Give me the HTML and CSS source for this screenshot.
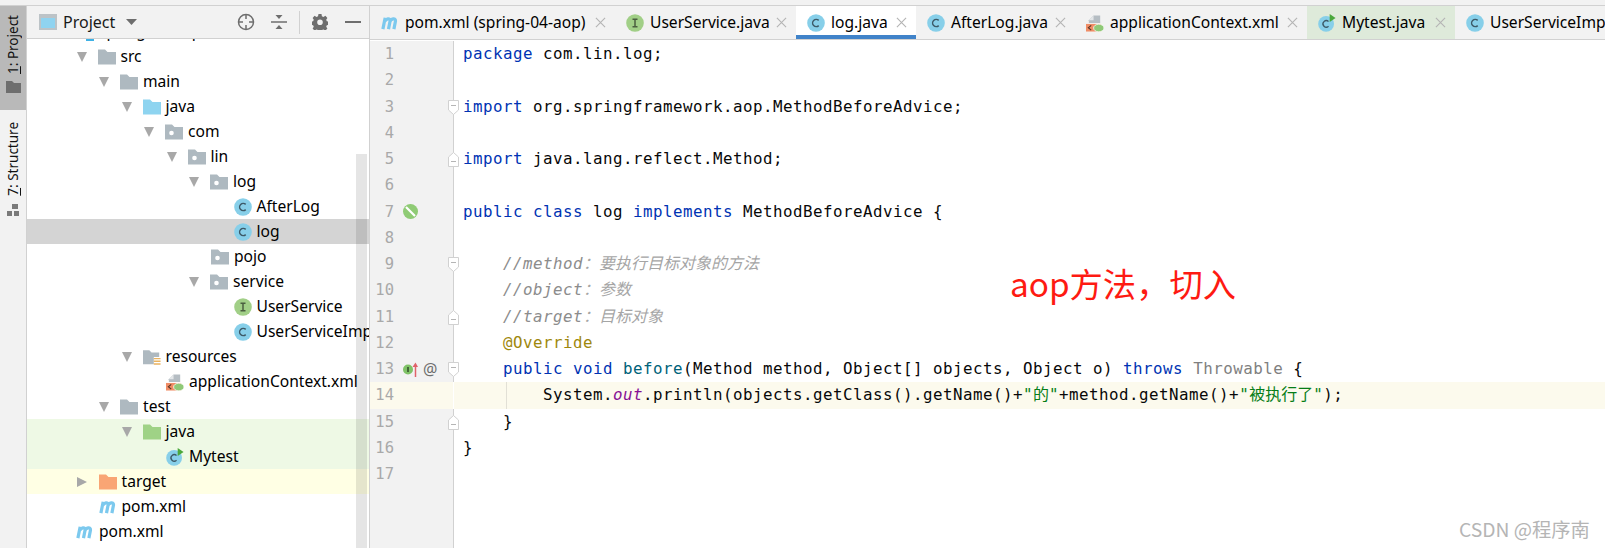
FILE: index.html
```html
<!DOCTYPE html>
<html lang="en">
<head>
<meta charset="utf-8">
<title>log.java</title>
<link rel="stylesheet" href="styles.css">
</head>
<body>
<svg class="defs" xmlns="http://www.w3.org/2000/svg">
  <symbol id="folder" viewBox="0 0 18 18"><path d="M0 1.500h7l2.500 2.500h8.500v12.500h-18z" fill="#aeb9c0"/></symbol>
  <symbol id="pkg" viewBox="0 0 18 18"><path d="M0 1.500h7l2.500 2.500h8.500v12.500h-18z" fill="#aeb9c0"/><circle cx="6.500" cy="10" r="2.300" fill="#fff"/></symbol>
  <symbol id="src" viewBox="0 0 18 18"><path d="M0 1.500h7l2.500 2.500h8.500v12.500h-18z" fill="#8ed4f0"/></symbol>
  <symbol id="test" viewBox="0 0 18 18"><path d="M0 1.500h7l2.500 2.500h8.500v12.500h-18z" fill="#9fd286"/></symbol>
  <symbol id="target" viewBox="0 0 18 18"><path d="M0 1.500h7l2.500 2.500h8.500v12.500h-18z" fill="#f9a574"/></symbol>
  <symbol id="res" viewBox="0 0 20 18"><path d="M0 1.500h7l2.500 2.500h8.500v5h-6v8h-12z" fill="#aeb9c0"/><path d="M12 10h7.500v1.600h-7.500zM12 13h7.500v1.600h-7.500zM12 16h7.500v1.600h-7.500z" fill="#eab35f"/></symbol>
  <symbol id="cls" viewBox="0 0 18 18"><circle cx="9" cy="9" r="8.800" fill="#87cfe9"/><path d="M11.700 6.400a3.600 3.600 0 1 0 0 5.200" fill="none" stroke="#3d5a68" stroke-width="1.500"/></symbol>
  <symbol id="iface" viewBox="0 0 18 18"><circle cx="9" cy="9" r="8.800" fill="#a1cf87"/><path d="M6.500 5.200h5M6.500 12.800h5M9 5.200v7.600" fill="none" stroke="#4b5f40" stroke-width="1.500"/></symbol>
  <symbol id="run" viewBox="0 0 20 20"><circle cx="9" cy="11" r="8.800" fill="#87cfe9"/><path d="M11.700 8.400a3.600 3.600 0 1 0 0 5.200" fill="none" stroke="#3d5a68" stroke-width="1.500"/><path d="M13 0l6.500 4.500-6.500 4.500z" fill="#4aa83c"/></symbol>
  <symbol id="spring" viewBox="0 0 19 19"><path d="M3 6.500l5-5h7v8h-12z" fill="#b5bdc3"/><path d="M8 1.500v5h-5z" fill="#e4e7e9"/><path d="M0 10.500h16v8h-16z" fill="#f08d66"/><path d="M5.500 12l-3 2.500 3 2.500" fill="none" stroke="#5a3526" stroke-width="1.200"/><ellipse cx="13.500" cy="14.800" rx="5.500" ry="4" fill="#8fc977" stroke="#fff" stroke-width=".8"/></symbol>
  <symbol id="maven" viewBox="0 0 19 15"><path d="M2 14l2.400-12M4 6c1-3 6-4.500 5.600-.5l-1.700 8.500M9.500 6c1-3 6.200-4.500 5.800-.5l-1.700 8.500" fill="none" stroke="#7cc9ee" stroke-width="3.400"/></symbol>
  <symbol id="fold-open" viewBox="0 0 11 15"><path d="M.5.500h10v9.500l-5 4.500-5-4.500z" fill="#fff" stroke="#d1d1d1"/><path d="M3 5.500h5" stroke="#b5b5b5"/></symbol>
  <symbol id="fold-shut" viewBox="0 0 11 15"><path d="M.5 14.500h10v-9.500l-5-4.500-5 4.500z" fill="#fff" stroke="#d1d1d1"/><path d="M3 9.500h5" stroke="#b5b5b5"/></symbol>
</svg>

<div class="strip"></div>
<div class="app">
  <nav class="rail">
    <div class="rail-tab active">
      <span class="rail-label"><u>1</u>: Project</span>
      <svg class="rail-icon" viewBox="0 0 15 12"><path d="M0 0h6l2 2h7v10h-15z" fill="#6e6e6e"/></svg>
    </div>
    <div class="rail-tab second">
      <span class="rail-label"><u>7</u>: Structure</span>
      <svg class="rail-icon" viewBox="0 0 13 12"><path d="M5 0h6v5h-6zM0 7h5v5h-5zM7 7h5v5h-5z" fill="#7a7a7a"/></svg>
    </div>
  </nav>

  <aside class="panel">
    <header class="panel-head">
      <svg class="view-icon" viewBox="0 0 18 16"><rect width="18" height="16" fill="#bcc3c7"/><rect x="2" y="4" width="14" height="10" fill="#8fd3f0"/></svg>
      <span class="panel-title">Project</span>
      <svg class="drop" viewBox="0 0 11 6"><path d="M0 0h11l-5.500 6z" fill="#6e6e6e"/></svg>
      <span class="head-space"></span>
      <svg class="tool t-target" viewBox="0 0 18 18"><circle cx="9" cy="9" r="7.500" fill="none" stroke="#6e6e6e" stroke-width="1.500"/><path d="M9 1v5M9 12v5M1 9h5M12 9h5" stroke="#6e6e6e" stroke-width="1.500"/></svg>
      <svg class="tool t-collapse" viewBox="0 0 18 18"><path d="M1 9h16" stroke="#6e6e6e" stroke-width="1.500"/><path d="M5.500 2h7l-3.500 4zM5.500 16h7l-3.500-4z" fill="#6e6e6e"/></svg>
      <span class="tool-sep"></span>
      <svg class="tool t-gear" viewBox="0 0 16 16"><path fill="#6e6e6e" fill-rule="evenodd" d="M6.500 0h3l.4 2.200 1.500.7 2-1.200 2 2.200-1.200 1.900.6 1.500 2.200.4v3l-2.200.5-.6 1.500 1.200 1.900-2 2-2-1.200-1.500.6-.4 2.200h-3l-.5-2.200-1.500-.6-1.900 1.200-2-2 1.200-1.900-.7-1.500-2.200-.5v-3l2.200-.4.700-1.500-1.200-1.900 2-2.200 1.900 1.200 1.500-.7zM8 5.400a2.800 2.800 0 1 0 0 5.600 2.800 2.800 0 0 0 0-5.600z"/></svg>
      <svg class="tool t-min" viewBox="0 0 16 2"><path d="M0 1h16" stroke="#6e6e6e" stroke-width="2"/></svg>
    </header>

    <div class="tree">
      <div class="row l0 partial"><span class="mod-dot"></span><span class="name">spring-04-aop</span></div>
      <div class="row l1"><i class="arrow"></i><svg class="ic"><use href="#folder"/></svg><span class="name">src</span></div>
      <div class="row l2"><i class="arrow"></i><svg class="ic"><use href="#folder"/></svg><span class="name">main</span></div>
      <div class="row l3"><i class="arrow"></i><svg class="ic"><use href="#src"/></svg><span class="name">java</span></div>
      <div class="row l4"><i class="arrow"></i><svg class="ic"><use href="#pkg"/></svg><span class="name">com</span></div>
      <div class="row l5"><i class="arrow"></i><svg class="ic"><use href="#pkg"/></svg><span class="name">lin</span></div>
      <div class="row l6"><i class="arrow"></i><svg class="ic"><use href="#pkg"/></svg><span class="name">log</span></div>
      <div class="row l7"><svg class="ic"><use href="#cls"/></svg><span class="name">AfterLog</span></div>
      <div class="row l7 selected"><svg class="ic"><use href="#cls"/></svg><span class="name">log</span></div>
      <div class="row l6"><svg class="ic"><use href="#pkg"/></svg><span class="name">pojo</span></div>
      <div class="row l6"><i class="arrow"></i><svg class="ic"><use href="#pkg"/></svg><span class="name">service</span></div>
      <div class="row l7"><svg class="ic"><use href="#iface"/></svg><span class="name">UserService</span></div>
      <div class="row l7"><svg class="ic"><use href="#cls"/></svg><span class="name">UserServiceImpl</span></div>
      <div class="row l3"><i class="arrow"></i><svg class="ic"><use href="#res"/></svg><span class="name">resources</span></div>
      <div class="row l4"><svg class="ic"><use href="#spring"/></svg><span class="name">applicationContext.xml</span></div>
      <div class="row l2"><i class="arrow"></i><svg class="ic"><use href="#folder"/></svg><span class="name">test</span></div>
      <div class="row l3 green"><i class="arrow"></i><svg class="ic"><use href="#test"/></svg><span class="name">java</span></div>
      <div class="row l4 green"><svg class="ic"><use href="#run"/></svg><span class="name">Mytest</span></div>
      <div class="row l1 yellow"><i class="arrow closed"></i><svg class="ic"><use href="#target"/></svg><span class="name">target</span></div>
      <div class="row l1"><svg class="ic"><use href="#maven"/></svg><span class="name">pom.xml</span></div>
      <div class="row l0"><svg class="ic"><use href="#maven"/></svg><span class="name">pom.xml</span></div>
    </div>
    <div class="scrollbar"></div>
  </aside>

  <main class="editor">
    <div class="tabs">
      <div class="tab t1"><svg class="ic"><use href="#maven"/></svg><span class="label">pom.xml (spring-04-aop)</span><svg class="x" viewBox="0 0 12 12"><path d="M1 1l10 10M11 1l-10 10"/></svg></div>
      <div class="tab t2"><svg class="ic"><use href="#iface"/></svg><span class="label">UserService.java</span><svg class="x" viewBox="0 0 12 12"><path d="M1 1l10 10M11 1l-10 10"/></svg></div>
      <div class="tab t3 current"><svg class="ic"><use href="#cls"/></svg><span class="label">log.java</span><svg class="x" viewBox="0 0 12 12"><path d="M1 1l10 10M11 1l-10 10"/></svg></div>
      <div class="tab t4"><svg class="ic"><use href="#cls"/></svg><span class="label">AfterLog.java</span><svg class="x" viewBox="0 0 12 12"><path d="M1 1l10 10M11 1l-10 10"/></svg></div>
      <div class="tab t5"><svg class="ic"><use href="#spring"/></svg><span class="label">applicationContext.xml</span><svg class="x" viewBox="0 0 12 12"><path d="M1 1l10 10M11 1l-10 10"/></svg></div>
      <div class="tab t6 testtab"><svg class="ic"><use href="#run"/></svg><span class="label">Mytest.java</span><svg class="x" viewBox="0 0 12 12"><path d="M1 1l10 10M11 1l-10 10"/></svg></div>
      <div class="tab t7"><svg class="ic"><use href="#cls"/></svg><span class="label">UserServiceImpl.java</span></div>
    </div>

    <div class="lines">
      <div class="line"><div class="gut"><span class="num">1</span></div><div class="code"><b class="kw">package</b> com.lin.log;</div></div>
      <div class="line"><div class="gut"><span class="num">2</span></div><div class="code"></div></div>
      <div class="line"><div class="gut"><span class="num">3</span><svg class="fold"><use href="#fold-open"/></svg></div><div class="code"><b class="kw">import</b> org.springframework.aop.MethodBeforeAdvice;</div></div>
      <div class="line"><div class="gut"><span class="num">4</span></div><div class="code"></div></div>
      <div class="line"><div class="gut"><span class="num">5</span><svg class="fold"><use href="#fold-shut"/></svg></div><div class="code"><b class="kw">import</b> java.lang.reflect.Method;</div></div>
      <div class="line"><div class="gut"><span class="num">6</span></div><div class="code"></div></div>
      <div class="line"><div class="gut"><span class="num">7</span><svg class="bean" viewBox="0 0 15 15"><circle cx="7.500" cy="7.500" r="7.500" fill="#8fcb75"/><path d="M3 3l9 9" stroke="#fff" stroke-width="2.200"/></svg></div><div class="code"><b class="kw">public class</b> log <b class="kw">implements</b> MethodBeforeAdvice {</div></div>
      <div class="line"><div class="gut"><span class="num">8</span></div><div class="code"></div></div>
      <div class="line"><div class="gut"><span class="num">9</span><svg class="fold"><use href="#fold-open"/></svg></div><div class="code">    <em class="cm">//method<span class="zh">：要执行目标对象的方法</span></em></div></div>
      <div class="line"><div class="gut"><span class="num">10</span></div><div class="code">    <em class="cm">//object<span class="zh">：参数</span></em></div></div>
      <div class="line"><div class="gut"><span class="num">11</span><svg class="fold"><use href="#fold-shut"/></svg></div><div class="code">    <em class="cm">//target<span class="zh">：目标对象</span></em></div></div>
      <div class="line"><div class="gut"><span class="num">12</span></div><div class="code">    <span class="ann">@Override</span></div></div>
      <div class="line"><div class="gut"><span class="num">13</span><svg class="impl" viewBox="0 0 15 15"><circle cx="5" cy="7.500" r="5" fill="#7fc267"/><path d="M5 5v5" stroke="#35502c" stroke-width="1.600"/><path d="M12.500 15V3" stroke="#e0626a" stroke-width="1.500"/><path d="M9.500 5l3-4.500 2.500 4.500z" fill="#e0626a"/></svg><span class="at">@</span><svg class="fold"><use href="#fold-open"/></svg></div><div class="code">    <b class="kw">public void</b> <span class="fn">before</span>(Method method, Object[] objects, Object o) <b class="kw">throws</b> <span class="dim">Throwable</span> {</div></div>
      <div class="line caret"><div class="gut"><span class="num">14</span><i class="guide-start"></i></div><div class="code"><span class="guide"></span>        System.<em class="field">out</em>.println(objects.getClass().getName()+<span class="str">"<span class="zh">的</span>"</span>+method.getName()+<span class="str">"<span class="zh">被执行了</span>"</span>);</div></div>
      <div class="line"><div class="gut"><span class="num">15</span><svg class="fold"><use href="#fold-shut"/></svg></div><div class="code">    }</div></div>
      <div class="line"><div class="gut"><span class="num">16</span></div><div class="code">}</div></div>
      <div class="line"><div class="gut"><span class="num">17</span></div><div class="code"></div></div>
      <div class="line rest"><div class="gut"></div><div class="code"></div></div>
    </div>

    <div class="note">aop方法，切入</div>
    <div class="mark">CSDN @程序南</div>
  </main>
</div>
</body>
</html>
```

FILE: styles.css
```css
* { box-sizing: border-box; }
html, body { margin: 0; padding: 0; height: 100%; overflow: hidden; background: #fff; }
body { display: flex; flex-direction: column; width: 1605px; height: 548px; font-family: "Noto Sans", "Noto Sans CJK SC", sans-serif; color: #000; }
.defs { display: none; }

.strip { flex: 0 0 6px; background: #f2f2f2; border-bottom: 1px solid #d1d1d1; }
.app { flex: 1; display: flex; min-height: 0; }

/* left rail */
.rail { flex: 0 0 27px; background: #f2f2f2; border-right: 1px solid #d1d1d1; display: flex; flex-direction: column; }
.rail-tab { display: flex; flex-direction: column; align-items: center; }
.rail-tab.active { height: 104px; padding-top: 9px; background: #b9b9b9; }
.rail-tab.second { padding-top: 12px; }
.rail-label { writing-mode: vertical-rl; transform: rotate(180deg); font-size: 13.500px; line-height: 16px; color: #111; white-space: nowrap; }
.rail-icon { width: 15px; height: 12px; margin-top: 7px; }
.rail-tab.second .rail-icon { width: 13px; margin-top: 8px; }

/* project panel */
.panel { flex: 0 0 343px; position: relative; display: flex; flex-direction: column; overflow: hidden; border-right: 1px solid #d1d1d1; }
.panel-head { flex: 0 0 33px; display: flex; align-items: center; background: #f2f2f2; border-bottom: 1px solid #d1d1d1; padding-left: 12px; position: relative; z-index: 1; }
.view-icon { width: 18px; height: 16px; margin-right: 6px; }
.panel-title { font-size: 16px; color: #1a1a1a; }
.drop { width: 11px; height: 6px; margin-left: 11px; }
.head-space { flex: 1; }
.tool { flex: none; }
.t-target { width: 18px; height: 18px; }
.t-collapse { width: 18px; height: 18px; margin-left: 15px; }
.tool-sep { width: 1px; height: 23px; background: #d1d1d1; margin-left: 11px; }
.t-gear { width: 16px; height: 16px; margin-left: 12px; }
.t-min { width: 16px; height: 2px; margin: 0 8px 0 17px; }

.tree { flex: 1; min-height: 0; overflow: hidden; }
.row { display: flex; align-items: center; height: 25px; font-size: 15.600px; white-space: nowrap; overflow: hidden; }
.name { margin-top: -2px; }
.partial { margin-top: -20px; }
.mod-dot { width: 8px; height: 8px; margin: 0 5px 3px 10px; align-self: flex-end; background: #3fb1e5; flex: none; }
.l0 { padding-left: 49px; }
.l1 { padding-left: 71.500px; }
.l2 { padding-left: 94px; }
.l3 { padding-left: 116.500px; }
.l4 { padding-left: 139px; }
.l5 { padding-left: 161.500px; }
.l6 { padding-left: 184px; }
.l7 { padding-left: 206.500px; }
.ic { width: 18px; height: 18px; flex: none; margin-right: 5px; overflow: visible; }
.arrow { flex: none; width: 0; height: 0; margin-left: -22px; margin-right: 11px; border-left: 5.500px solid transparent; border-right: 5.500px solid transparent; border-top: 10px solid #a8a8a8; }
.arrow.closed { border-top: 5.500px solid transparent; border-bottom: 5.500px solid transparent; border-left: 10px solid #a8a8a8; border-right: 0; margin-right: 12px; }
.selected { background: #d4d4d4; }
.green { background: #eef9e5; }
.yellow { background: #ffffe4; }
.scrollbar { position: absolute; left: 329px; top: 148px; bottom: 0; width: 11px; background: rgba(0, 0, 0, .1); }

/* editor */
.editor { flex: 1; min-width: 0; position: relative; display: flex; flex-direction: column; }
.tabs { flex: 0 0 34px; display: flex; background: #f2f2f2; border-bottom: 1px solid #d1d1d1; font-size: 15.600px; white-space: nowrap; overflow: hidden; }
.tab { flex: none; display: flex; align-items: center; height: 33px; padding-left: 11px; color: #000; }
.tab .ic { margin-right: 6px; }
.label { flex: 1 0 auto; margin-top: -1px; }
.x { flex: none; width: 11px; height: 11px; margin-right: 9px; stroke: #b4b4b4; stroke-width: 1.200; fill: none; }
.t1 { width: 245px; }
.t2 { width: 181px; }
.t3 { width: 120px; }
.t4 { width: 159px; }
.t5 { width: 232px; }
.t6 { width: 148px; }
.current { background: #fff; box-shadow: inset 0 -4px 0 #4083c9; }
.testtab { background: #deeada; }

.lines { flex: 1; min-height: 0; display: flex; flex-direction: column; padding-top: 1px; }
.line { flex: 0 0 26.250px; min-height: 0; display: flex; overflow: visible; font: 15.800px/26.250px "DejaVu Sans Mono", "Noto Sans CJK SC", monospace; color: #080808; }
.line.rest { flex: 1; }
.gut { flex: 0 0 84px; position: relative; display: flex; align-items: center; background: #f2f2f2; border-right: 1px solid #d1d1d1; }
.num { flex: 0 0 24px; text-align: right; color: #a9a9a9; font-size: 15.500px; }
.code { flex: 1; height: 100%; padding-left: 9px; white-space: pre; letter-spacing: .49px; position: relative; min-width: 0; overflow: hidden; }
.caret .gut, .caret .code { background: #fcfaed; }
.kw { font-weight: normal; color: #0033b3; }
.cm { color: #8c8c8c; font-style: italic; }
.ann { color: #9e880d; }
.fn { color: #00627a; }
.dim { color: #808080; }
.field { color: #871094; font-style: italic; }
.str { color: #067d17; }
.zh { letter-spacing: 0; font-size: 16px; line-height: 0; font-family: "Noto Sans CJK SC", sans-serif; }
.cm .zh { color: #a5a5a5; }
.fold { position: absolute; right: -6px; top: 6px; width: 11px; height: 15px; }
.bean { width: 15px; height: 15px; margin-left: 9px; flex: none; }
.impl { width: 15px; height: 15px; margin-left: 9px; flex: none; }
.at { margin-left: 5px; font: 16px/1 "Noto Sans", sans-serif; color: #6e6e6e; }
.guide { position: absolute; left: 52px; top: 0; bottom: 0; width: 1px; background: #e2e0d6; }
.guide-start { position: absolute; right: -1px; top: 0; bottom: 0; width: 1px; background: #fff; }

.note { position: absolute; left: 640px; top: 254px; font: 33.300px/46px "Noto Sans CJK SC", sans-serif; color: #fe1a12; white-space: nowrap; }
.mark { position: absolute; left: 1089px; top: 511px; font: 19.300px/24px "Noto Sans CJK SC", sans-serif; color: #b5b5b5; white-space: nowrap; }
```
